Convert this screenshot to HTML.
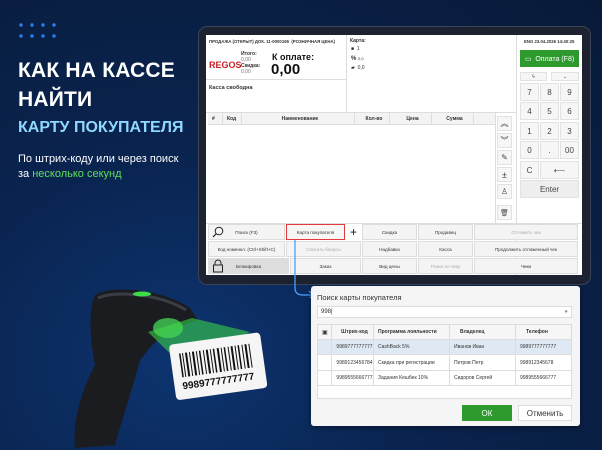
<!DOCTYPE html>
<html><head><meta charset="utf-8"><style>
*{margin:0;padding:0;box-sizing:border-box}
body{width:602px;height:450px;overflow:hidden;font-family:"Liberation Sans",sans-serif;background:radial-gradient(ellipse at 30% 80%,#0d3470 0%,#0a2450 40%,#081a38 100%);position:relative}
.a{position:absolute}
.t{color:#fff;font-weight:bold;font-size:21px;left:18px;letter-spacing:0.2px}
.s{font-size:5px;color:#333;position:absolute;white-space:nowrap}
.b{position:absolute;background:#f4f4f4;border:1px solid #ddd;font-size:4.6px;color:#333;display:flex;align-items:center;justify-content:center}
.k{position:absolute;background:#f6f6f6;border:1px solid #e2e2e2;font-size:8px;color:#444;display:flex;align-items:center;justify-content:center}
.c{position:relative;flex-shrink:0;font-size:5px;color:#333;display:flex;align-items:center;padding-left:4px;border-right:1px solid #ddd;height:100%;white-space:nowrap;overflow:hidden}
</style></head><body>
<svg class="a" style="left:18px;top:21px" width="40" height="20"><g fill="#2f7df0"><circle cx="3" cy="4" r="1.7"/><circle cx="14" cy="4" r="1.7"/><circle cx="25" cy="4" r="1.7"/><circle cx="36" cy="4" r="1.7"/><circle cx="3" cy="15" r="1.7"/><circle cx="14" cy="15" r="1.7"/><circle cx="25" cy="15" r="1.7"/><circle cx="36" cy="15" r="1.7"/></g></svg>
<div class="a t" style="top:59px">КАК НА КАССЕ</div>
<div class="a t" style="top:88px">НАЙТИ</div>
<div class="a" style="left:18px;top:119px;color:#8fd8ff;font-weight:bold;font-size:16px">КАРТУ ПОКУПАТЕЛЯ</div>
<div class="a" style="left:18px;top:152px;color:#fff;font-size:11px;line-height:15px">По штрих-коду или через поиск<br>за <span style="color:#5fe05a">несколько секунд</span></div>

<!-- tablet -->
<div class="a" style="left:198px;top:26px;width:393px;height:259px;background:#1c2230;border-radius:9px;border:1px solid #3a4358"></div>
<div class="a" style="left:206px;top:35px;width:376px;height:240px;background:#fff"></div>
<div class="a" style="left:346px;top:35px;width:1px;height:78px;background:#ddd"></div>
<div class="a" style="left:516px;top:35px;width:1px;height:240px;background:#ddd"></div>
<div class="a" style="left:206px;top:79px;width:140px;height:1px;background:#ddd"></div>
<div class="a" style="left:206px;top:112px;width:310px;height:1px;background:#ddd"></div>
<div class="s" style="left:209px;top:39px;font-weight:bold;font-size:4.3px">ПРОДАЖА (ОТКРЫТ) ДОК. 11-0000165 &nbsp;(РОЗНИЧНАЯ ЦЕНА)</div>
<div class="a" style="left:209px;top:60px;color:#c8202a;font-weight:bold;font-size:9px">REGOS</div>
<div class="s" style="left:241px;top:51px;font-weight:bold">Итого:<br><span style="font-weight:normal;color:#777">0,00</span><br>Скидка:<br><span style="font-weight:normal;color:#777">0,00</span></div>
<div class="a" style="left:272px;top:52px;font-size:9px;font-weight:bold;color:#111">К оплате:</div>
<div class="a" style="left:271px;top:61px;font-size:15px;font-weight:bold;color:#111">0,00</div>
<div class="s" style="left:209px;top:85px;font-weight:bold;font-size:5.5px">Касса свободна</div>
<div class="s" style="left:350px;top:38px;font-weight:bold">Карта:</div>
<div class="s" style="left:351px;top:46px">■ &nbsp;1</div>
<div class="s" style="left:351px;top:56px;font-size:6px;font-weight:bold">% <span style="font-size:4px;font-weight:normal">0,0</span></div>
<div class="s" style="left:351px;top:65px">▰ &nbsp;0,0</div>
<div class="s" style="left:524px;top:39px;font-size:4.3px;font-weight:bold">ENG 23.04.2026 14:40:25</div>
<div class="a" style="left:520px;top:50px;width:59px;height:17px;background:#2e9a2e;color:#fff;font-size:7px;display:flex;align-items:center;justify-content:center">▭&nbsp; Оплата (F8)</div>
<div class="k" style="left:520px;top:72px;width:27px;height:9px;font-size:5px">ϟ</div>
<div class="k" style="left:551px;top:72px;width:28px;height:9px;font-size:5px">⌄</div>
<div class="k" style="left:520px;top:83px;width:19px;height:18px">7</div><div class="k" style="left:540px;top:83px;width:19px;height:18px">8</div><div class="k" style="left:560px;top:83px;width:19px;height:18px">9</div>
<div class="k" style="left:520px;top:102px;width:19px;height:18px">4</div><div class="k" style="left:540px;top:102px;width:19px;height:18px">5</div><div class="k" style="left:560px;top:102px;width:19px;height:18px">6</div>
<div class="k" style="left:520px;top:122px;width:19px;height:18px">1</div><div class="k" style="left:540px;top:122px;width:19px;height:18px">2</div><div class="k" style="left:560px;top:122px;width:19px;height:18px">3</div>
<div class="k" style="left:520px;top:141px;width:19px;height:18px">0</div><div class="k" style="left:540px;top:141px;width:19px;height:18px">.</div><div class="k" style="left:560px;top:141px;width:19px;height:18px">00</div>
<div class="k" style="left:520px;top:161px;width:19px;height:18px">C</div><div class="k" style="left:540px;top:161px;width:39px;height:18px">⟵</div>
<div class="k" style="left:520px;top:180px;width:59px;height:18px;background:#eee">Enter</div>
<!-- table -->
<div class="a" style="left:208px;top:113px;width:287px;height:12px;background:#f3f3f3;border-bottom:1px solid #ddd;display:flex">
<div class="c" style="width:15px;font-weight:bold">#</div><div class="c" style="width:19px;font-weight:bold">Код</div><div class="c" style="width:113px;justify-content:center;font-weight:bold">Наименование</div><div class="c" style="width:35px;justify-content:center;font-weight:bold">Кол-во</div><div class="c" style="width:42px;justify-content:center;font-weight:bold">Цена</div><div class="c" style="width:42px;justify-content:center;font-weight:bold">Сумма</div></div>
<div class="a" style="left:495px;top:113px;width:1px;height:111px;background:#ddd"></div>
<div class="k" style="left:497px;top:116px;width:15px;height:15px;font-size:8px">︽</div>
<div class="k" style="left:497px;top:133px;width:15px;height:15px;font-size:8px">︾</div>
<div class="k" style="left:497px;top:150px;width:15px;height:15px;font-size:8px">✎</div>
<div class="k" style="left:497px;top:167px;width:15px;height:15px;font-size:9px">±</div>
<div class="k" style="left:497px;top:184px;width:15px;height:15px;font-size:8px">♙</div>
<div class="k" style="left:497px;top:205px;width:15px;height:15px;font-size:7px">🗑</div>
<!-- bottom buttons -->
<div class="a" style="left:206px;top:223px;width:376px;height:1px;background:#ddd"></div>
<div class="b" style="left:208px;top:224px;width:77px;height:16px">Поиск (F3)</div>
<svg class="a" style="left:212px;top:226px" width="12" height="12"><circle cx="7" cy="5" r="3.8" fill="none" stroke="#222" stroke-width="1"/><line x1="4.3" y1="7.7" x2="1" y2="11" stroke="#222" stroke-width="1.2"/></svg>
<div class="b" style="left:286px;top:224px;width:59px;height:16px;border:1px solid #e23a3a;background:#f6f6f6">Карта покупателя</div>
<div class="b" style="left:346px;top:224px;width:15px;height:16px;font-size:12px;color:#111;background:#fff;border:none">+</div>
<div class="b" style="left:362px;top:224px;width:55px;height:16px">Скидка</div>
<div class="b" style="left:418px;top:224px;width:55px;height:16px">Продавец</div>
<div class="b" style="left:474px;top:224px;width:104px;height:16px;color:#aaa">Отложить чек</div>
<div class="b" style="left:208px;top:241px;width:77px;height:16px">Код номенкл. (Ctrl+Shift+C)</div>
<div class="b" style="left:286px;top:241px;width:75px;height:16px;color:#aaa">Списать бонусы</div>
<div class="b" style="left:362px;top:241px;width:55px;height:16px">Надбавка</div>
<div class="b" style="left:418px;top:241px;width:55px;height:16px">Касса</div>
<div class="b" style="left:474px;top:241px;width:104px;height:16px">Продолжить отложенный чек</div>
<div class="b" style="left:208px;top:258px;width:81px;height:16px;background:#ddd">Блокировка</div>
<svg class="a" style="left:212px;top:259px" width="12" height="14"><path d="M3 6V4a3 3 0 0 1 6 0v2" fill="none" stroke="#222"/><rect x="1.5" y="6" width="9" height="7" fill="none" stroke="#222"/></svg>
<div class="b" style="left:290px;top:258px;width:71px;height:16px">Заказ</div>
<div class="b" style="left:362px;top:258px;width:55px;height:16px">Вид цены</div>
<div class="b" style="left:418px;top:258px;width:55px;height:16px;color:#aaa">Поиск по чеку</div>
<div class="b" style="left:474px;top:258px;width:104px;height:16px">Чеки</div>
<!-- arrow -->
<svg class="a" style="left:280px;top:238px" width="40" height="60"><path d="M15 2V50q0 7 8 7h10M29 53l4 4-4 4" fill="none" stroke="#4aa0ff" stroke-width="1.3"/></svg>
<!-- scanner -->
<svg class="a" style="left:60px;top:270px" width="250" height="180">
<path d="M35,25 C50,15 100,18 130,38 L138,50 C120,55 100,65 88,80 L80,90 C75,110 65,140 55,175 L15,178 C12,150 22,120 35,95 C30,70 28,40 35,25Z" fill="#1a1c20"/>
<path d="M38,28 C55,20 100,24 126,40" stroke="#3a3d44" stroke-width="3" fill="none"/>
<ellipse cx="82" cy="24" rx="9" ry="2.5" fill="#3ddc4a"/>
<polygon points="88,62 132,48 190,62 125,98" fill="#38d048" opacity="0.6"/>
<ellipse cx="108" cy="58" rx="15" ry="10" fill="#46d854" opacity="0.75"/>
<g transform="rotate(-8 160 95)"><rect x="112" y="68" width="92" height="56" rx="4" fill="#f5f5f5"/>
<g fill="#111"><rect x="121" y="78" width="1.5" height="24"/><rect x="124" y="78" width="1" height="24"/><rect x="127" y="78" width="2" height="24"/><rect x="131" y="78" width="1" height="24"/><rect x="134" y="78" width="2" height="24"/><rect x="138" y="78" width="1" height="24"/><rect x="141" y="78" width="1.5" height="24"/><rect x="145" y="78" width="1" height="24"/><rect x="148" y="78" width="2" height="24"/><rect x="152" y="78" width="1" height="24"/><rect x="155" y="78" width="1.5" height="24"/><rect x="159" y="78" width="2" height="24"/><rect x="163" y="78" width="1" height="24"/><rect x="166" y="78" width="1.5" height="24"/><rect x="170" y="78" width="1" height="24"/><rect x="173" y="78" width="2" height="24"/><rect x="177" y="78" width="1" height="24"/><rect x="180" y="78" width="1.5" height="24"/><rect x="184" y="78" width="1" height="24"/><rect x="187" y="78" width="2" height="24"/><rect x="191" y="78" width="1" height="24"/></g>
<text x="120" y="114" font-family="Liberation Sans" font-size="10" font-weight="bold" fill="#111">9989777777777</text></g>
</svg>
<!-- dialog -->
<div class="a" style="left:311px;top:286px;width:269px;height:140px;background:#f5f5f5;border-radius:3px;box-shadow:0 2px 6px rgba(0,0,0,.4)"></div>
<div class="a" style="left:317px;top:293px;font-size:7.5px;color:#333">Поиск карты покупателя</div>
<div class="a" style="left:317px;top:306px;width:255px;height:12px;background:#fff;border:1px solid #ddd;font-size:6px;color:#333;padding:2px 3px">998|<span style="float:right;color:#999">●</span></div>
<div class="a" style="left:317px;top:324px;width:255px;height:75px;background:#fff;border:1px solid #ddd"></div>
<div class="a" style="left:318px;top:325px;width:253px;height:14px;background:#f6f6f6;display:flex">
<div class="c" style="width:14px;font-size:6px">▣</div><div class="c" style="width:42px;justify-content:center;font-weight:bold">Штрих-код</div><div class="c" style="width:76px;font-weight:bold">Программа лояльности</div><div class="c" style="width:66px;padding-left:10px;font-weight:bold">Владелец</div><div class="c" style="width:55px;padding-left:10px;font-weight:bold;border:none">Телефон</div></div>
<div class="a" style="left:318px;top:339px;width:253px;height:15px;background:#dfe9f3;display:flex;border-top:1px solid #ddd">
<div class="c" style="width:14px"></div><div class="c" style="width:42px;justify-content:center">9989777777777</div><div class="c" style="width:76px">CashBack 5%</div><div class="c" style="width:66px">Иванов Иван</div><div class="c" style="width:55px;border:none">9989777777777</div></div>
<div class="a" style="left:318px;top:354px;width:253px;height:16px;display:flex;border-top:1px solid #ddd">
<div class="c" style="width:14px"></div><div class="c" style="width:42px;justify-content:center">9989123456784</div><div class="c" style="width:76px">Скидка при регистрации</div><div class="c" style="width:66px">Петров Петр</div><div class="c" style="width:55px;border:none">998912345678</div></div>
<div class="a" style="left:318px;top:370px;width:253px;height:16px;display:flex;border-top:1px solid #ddd;border-bottom:1px solid #ddd">
<div class="c" style="width:14px"></div><div class="c" style="width:42px;justify-content:center">9989555666777</div><div class="c" style="width:76px">Задания Кешбек 10%</div><div class="c" style="width:66px">Сидоров Сергей</div><div class="c" style="width:55px;border:none">9989555666777</div></div>
<div class="a" style="left:462px;top:405px;width:50px;height:16px;background:#2e9a2e;color:#fff;font-size:8px;display:flex;align-items:center;justify-content:center">ОК</div>
<div class="a" style="left:518px;top:405px;width:54px;height:16px;background:#fff;border:1px solid #ddd;color:#333;font-size:8px;display:flex;align-items:center;justify-content:center">Отменить</div>
</body></html>
